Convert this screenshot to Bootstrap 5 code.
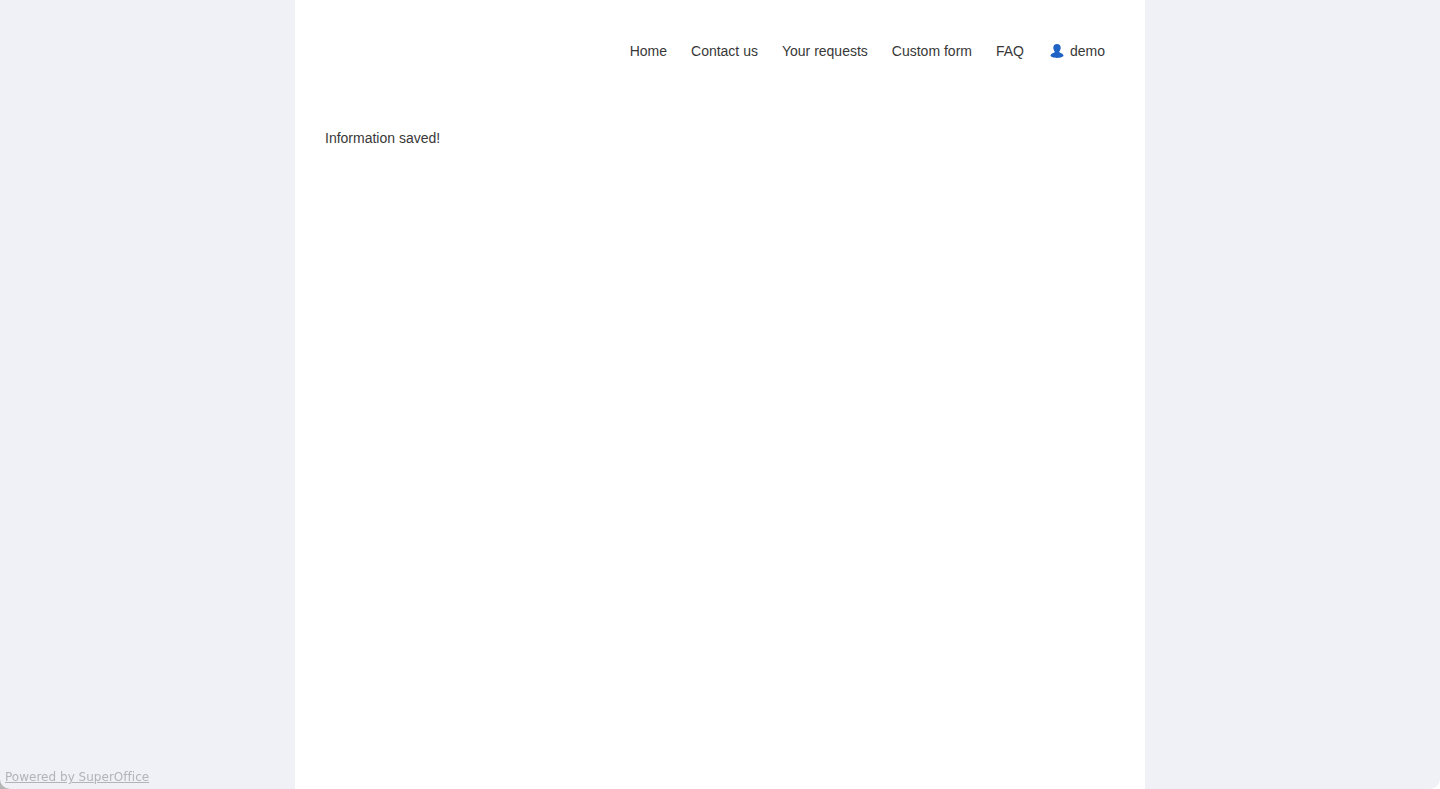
<!doctype html>
<html lang="en">
<head>
  <meta charset="utf-8">
  <meta name="viewport" content="width=device-width, initial-scale=1">
  <title>Information saved</title>
  <link href="https://cdn.jsdelivr.net/npm/bootstrap@5.3.3/dist/css/bootstrap.min.css" rel="stylesheet">
  <style>
    html, body { height: 100%; }
    body {
      background: #f0f1f6;
      color: #383838;
      font-family: "Liberation Sans", Arial, sans-serif;
      font-size: 14px;
      line-height: 20px;
      overflow: hidden;
    }
    .sheet { width: 850px; height: 100%; background: #fff; }
    .top-menu { padding: 41px 40px 0 30px; gap: 24px; }
    .top-menu a { color: #383838; text-decoration: none; }
    .user-link { gap: 6px; padding-left: 2px; }
    .saved-msg { padding: 67px 30px 0; }
    .powered {
      position: fixed;
      left: 5px;
      bottom: 3px;
      z-index: 2;
      font-family: "DejaVu Sans", Verdana, sans-serif;
      font-size: 12px;
      letter-spacing: .02px;
      line-height: 18px;
      color: #b2b3b7;
    }
    .corner { position: fixed; bottom: 0; width: 10px; height: 10px; background: #fff; }
    .corner-l { left: 0; background: #b5b5b5; }
    .corner-l::after, .corner-r::after {
      content: "";
      display: block;
      width: 100%;
      height: 100%;
      background: #f0f1f6;
    }
    .corner-l::after { border-bottom-left-radius: 10px; }
    .corner-r { right: 0; }
    .corner-r::after { border-bottom-right-radius: 10px; }
  </style>
</head>
<body>
  <div class="sheet mx-auto">
    <nav class="top-menu d-flex justify-content-end align-items-center">
      <a href="#">Home</a>
      <a href="#">Contact us</a>
      <a href="#">Your requests</a>
      <a href="#">Custom form</a>
      <a href="#">FAQ</a>
      <a href="#" class="user-link d-flex align-items-center">
        <svg width="14" height="14" viewBox="0 0 14 14" aria-hidden="true">
          <path fill="#1f63c4" d="M7 0c2.400 0 3.700 1.500 3.700 3.700 0 1.500-.6 2.900-1.400 3.700-.2.300-.1.900.4 1.200 1.300.7 3.300 1.200 3.800 3 .2 1-2.800 2.400-6.500 2.400S.3 12.600.5 11.600c.5-1.800 2.500-2.300 3.800-3 .5-.3.600-.9.400-1.200-.8-.8-1.400-2.200-1.400-3.700C3.300 1.500 4.600 0 7 0z"/>
        </svg>
        demo
      </a>
    </nav>
    <p class="saved-msg mb-0">Information saved!</p>
  </div>
  <a href="#" class="powered">Powered by SuperOffice</a>
  <div class="corner corner-l"></div>
  <div class="corner corner-r"></div>
</body>
</html>
